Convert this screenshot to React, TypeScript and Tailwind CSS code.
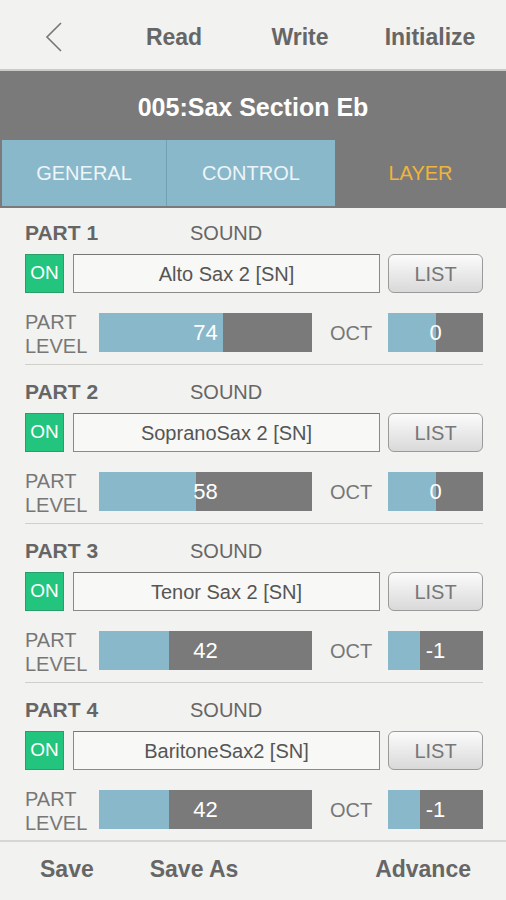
import React from "react"

interface Part {
  id: number
  sound: string
  level: number
  oct: number
}

const parts: Part[] = [
  { id: 1, sound: "Alto Sax 2 [SN]", level: 74, oct: 0 },
  { id: 2, sound: "SopranoSax 2 [SN]", level: 58, oct: 0 },
  { id: 3, sound: "Tenor Sax 2 [SN]", level: 42, oct: -1 },
  { id: 4, sound: "BaritoneSax2 [SN]", level: 42, oct: -1 },
]

function Bar({ pct, value, className }: { pct: number; value: string; className: string }) {
  return (
    <div className={`relative h-[39px] bg-[#7a7a7a] ${className}`}>
      <div className="absolute inset-y-0 left-0 bg-[#8ab8cb]" style={{ width: `${pct}%` }} />
      <div className="relative flex h-full items-center justify-center text-[22px] text-white">{value}</div>
    </div>
  )
}

function PartBlock({ part, first }: { part: Part; first: boolean }) {
  return (
    <div className={`${first ? "pt-[13px]" : "border-t border-[#cfcfcc] pt-[15px]"} pb-[12px]`}>
      <div className="flex h-[24px] items-center text-[20px] leading-[24px] text-[#666]">
        <span className="w-[165px] text-[21px] font-bold">PART {part.id}</span>
        <span>SOUND</span>
      </div>
      <div className="mt-[9px] flex h-[39px] items-stretch">
        <div className="flex w-[39px] items-center justify-center border border-[#2a9e68] bg-[#22c47e] text-[19px] text-white">
          ON
        </div>
        <div className="ml-[9px] flex flex-1 items-center justify-center border border-[#8a8a8a] border-t-[#777] bg-[#f8f8f7] text-[20px] text-[#555]">
          {part.sound}
        </div>
        <div className="ml-[8px] flex w-[95px] items-center justify-center rounded-[6px] border border-[#9a9a9a] bg-gradient-to-b from-[#fbfbfb] to-[#d9d9d9] text-[20px] text-[#777]">
          LIST
        </div>
      </div>
      <div className="mt-[20px] flex h-[39px] items-center">
        <div className="flex h-[39px] w-[74px] flex-col justify-center pt-[2px] text-[20px] leading-[24px] text-[#777]">
          <span>PART</span>
          <span>LEVEL</span>
        </div>
        <Bar className="w-[213px]" pct={(part.level / 127) * 100} value={String(part.level)} />
        <span className="ml-[18px] w-[58px] text-[20px] text-[#777]">OCT</span>
        <Bar className="w-[95px]" pct={((part.oct + 3) / 6) * 100} value={String(part.oct)} />
      </div>
    </div>
  )
}

export default function App() {
  return (
    <div className="flex h-[900px] w-[506px] flex-col overflow-hidden bg-[#f2f2f0] font-['Liberation_Sans',Arial,sans-serif]">
      <header className="flex h-[71px] shrink-0 items-center border-b-2 border-[#cbcbc8] pt-[5px] text-[23px] font-bold text-[#666]">
        <div className="flex w-[108px] justify-center">
          <svg width="20" height="32" viewBox="0 0 20 32" fill="none">
            <path d="M17 2 L3 16 L17 30" stroke="#777" strokeWidth="1.6" />
          </svg>
        </div>
        <div className="w-[132px] text-center">Read</div>
        <div className="w-[120px] text-center">Write</div>
        <div className="w-[140px] text-center">Initialize</div>
      </header>

      <div className="shrink-0 bg-[#7a7a7a]">
        <div className="flex h-[69px] items-center justify-center pt-[4px] text-[25px] font-bold text-white">
          005:Sax Section Eb
        </div>
        <div className="flex h-[66px] pl-[2px] text-[20px]">
          <div className="flex w-[165px] items-center justify-center border-r border-[#74a0b3] bg-[#8ab8cb] text-[#eef5f8]">
            GENERAL
          </div>
          <div className="flex w-[168px] items-center justify-center bg-[#8ab8cb] text-[#eef5f8]">CONTROL</div>
          <div className="flex flex-1 items-center justify-center text-[#f0b43a]">LAYER</div>
        </div>
        <div className="h-[2px]" />
      </div>

      <main className="min-h-0 flex-1 pl-[25px] pr-[23px]">
        {parts.map((p, i) => (
          <PartBlock key={p.id} part={p} first={i === 0} />
        ))}
      </main>

      <footer className="flex h-[60px] shrink-0 items-center border-t-2 border-[#d6d6d3] pb-[3px] pl-[40px] pr-[35px] text-[23px] font-bold text-[#666]">
        <span>Save</span>
        <span className="ml-[56px]">Save As</span>
        <span className="ml-auto">Advance</span>
      </footer>
    </div>
  )
}
